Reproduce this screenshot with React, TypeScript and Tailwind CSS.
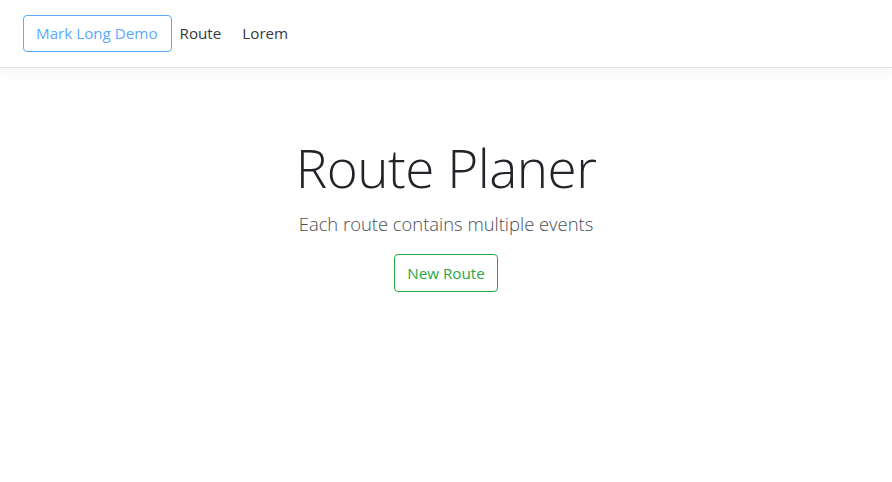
export default function App() {
  return (
    <div className="min-h-screen bg-white text-[#212529]" style={{ fontFamily: '"Open Sans", "Noto Sans", sans-serif' }}>
      <nav className="h-[68px] flex items-center px-[23px] border-b border-[#dee2e6] shadow-[0_4px_12px_rgba(0,0,0,0.05)]">
        <a className="h-[37px] pl-3 pr-[13px] flex items-center border border-[#5aabff] rounded text-[#5aabff] text-[15.2px] mr-[8px]">
          Mark Long Demo
        </a>
        <a className="text-[15.2px] text-[#343a40] mr-[21px]">Route</a>
        <a className="text-[15.2px] text-[#343a40]">Lorem</a>
      </nav>
      <main className="flex flex-col items-center pt-[68px]">
        <h1 className="text-[53px] font-light leading-[1.2] tracking-[-0.5px]">Route Planer</h1>
        <p className="text-[18.4px] font-light text-[#495057] mt-[10px]">Each route contains multiple events</p>
        <button className="mt-[17px] h-[38px] px-3 border border-[#28a745] rounded text-[#28a745] text-[15.2px]">
          New Route
        </button>
      </main>
    </div>
  );
}
